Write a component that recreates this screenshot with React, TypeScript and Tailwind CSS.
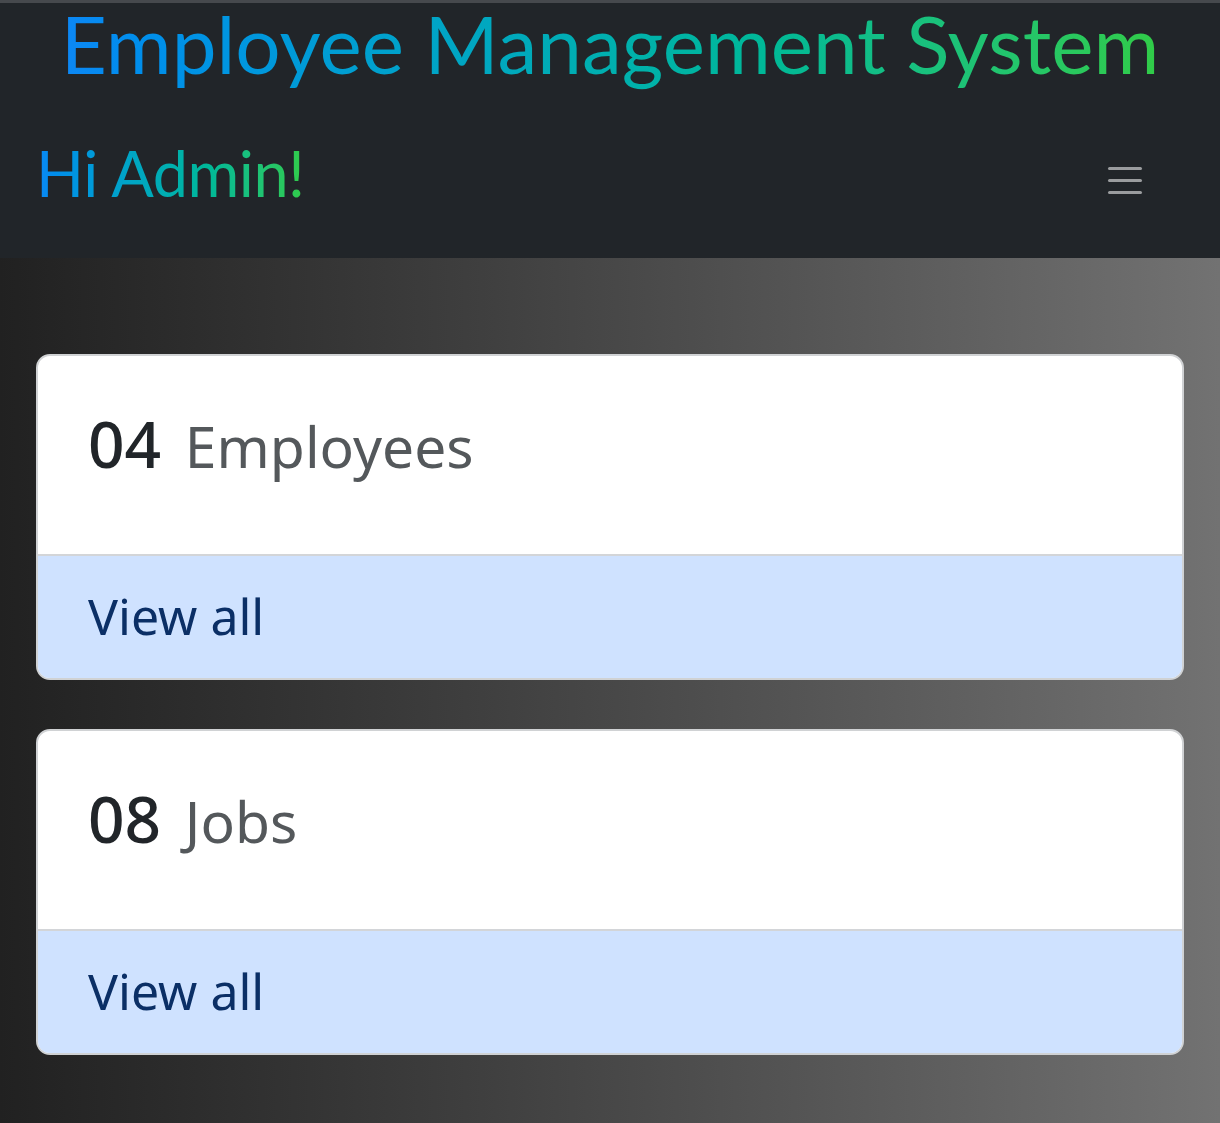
import React from 'react';

const stats = [
  { count: '04', label: 'Employees' },
  { count: '08', label: 'Jobs' },
];

const StatCard: React.FC<{ count: string; label: string }> = ({ count, label }) => (
  <div className="rounded-[14px] border-2 border-[#d0d2d4] bg-white overflow-hidden">
    <div className="h-[198px] pl-[50px] pt-[50px]">
      <h1 className="text-[64px] leading-[1.2] font-medium text-[#212529]">
        {count}{' '}
        <span className="ml-[7px] text-[57px] font-normal text-[#54585b]">{label}</span>
      </h1>
    </div>
    <div className="h-[124px] border-t-2 border-[#d3d5d8] bg-[#cfe2ff] pl-[50px] flex items-center">
      <a className="text-[50px] leading-none text-[#0b2f66] pb-[2px]">View all</a>
    </div>
  </div>
);

const App: React.FC = () => {
  return (
    <div className="min-h-[1123px] flex flex-col" style={{ fontFamily: '"Noto Sans", sans-serif' }}>
      <header
        className="h-[258px] bg-[#212529] border-t-[3px] border-[#46494d] flex flex-col"
        style={{ fontFamily: 'Lato, "Noto Sans", sans-serif' }}
      >
        <div className="flex justify-center">
          <span className="inline-block text-[80px] leading-[80px] pb-[20px] bg-gradient-to-r from-[#0d87f5] to-[#31cc47] bg-clip-text text-transparent">
            Employee Management System
          </span>
        </div>
        <div className="flex items-center justify-between pl-[36px] pr-[78px] mt-[32px]">
          <span className="inline-block text-[63px] leading-[1.2] tracking-[-0.5px] bg-gradient-to-r from-[#0d87f5] to-[#31cc47] bg-clip-text text-transparent">
            Hi Admin!
          </span>
          <button className="flex flex-col gap-[9px] w-[34px] mt-[16px]">
            <span className="block h-[3px] rounded-full bg-[#9a9c9e]" />
            <span className="block h-[3px] rounded-full bg-[#9a9c9e]" />
            <span className="block h-[3px] rounded-full bg-[#9a9c9e]" />
          </button>
        </div>
      </header>
      <main className="flex-1 bg-gradient-to-r from-[#212121] to-[#727272] px-[36px] pt-[96px] pb-[68px] flex flex-col gap-[49px]">
        {stats.map((s) => (
          <StatCard key={s.label} count={s.count} label={s.label} />
        ))}
      </main>
    </div>
  );
};

export default App;
